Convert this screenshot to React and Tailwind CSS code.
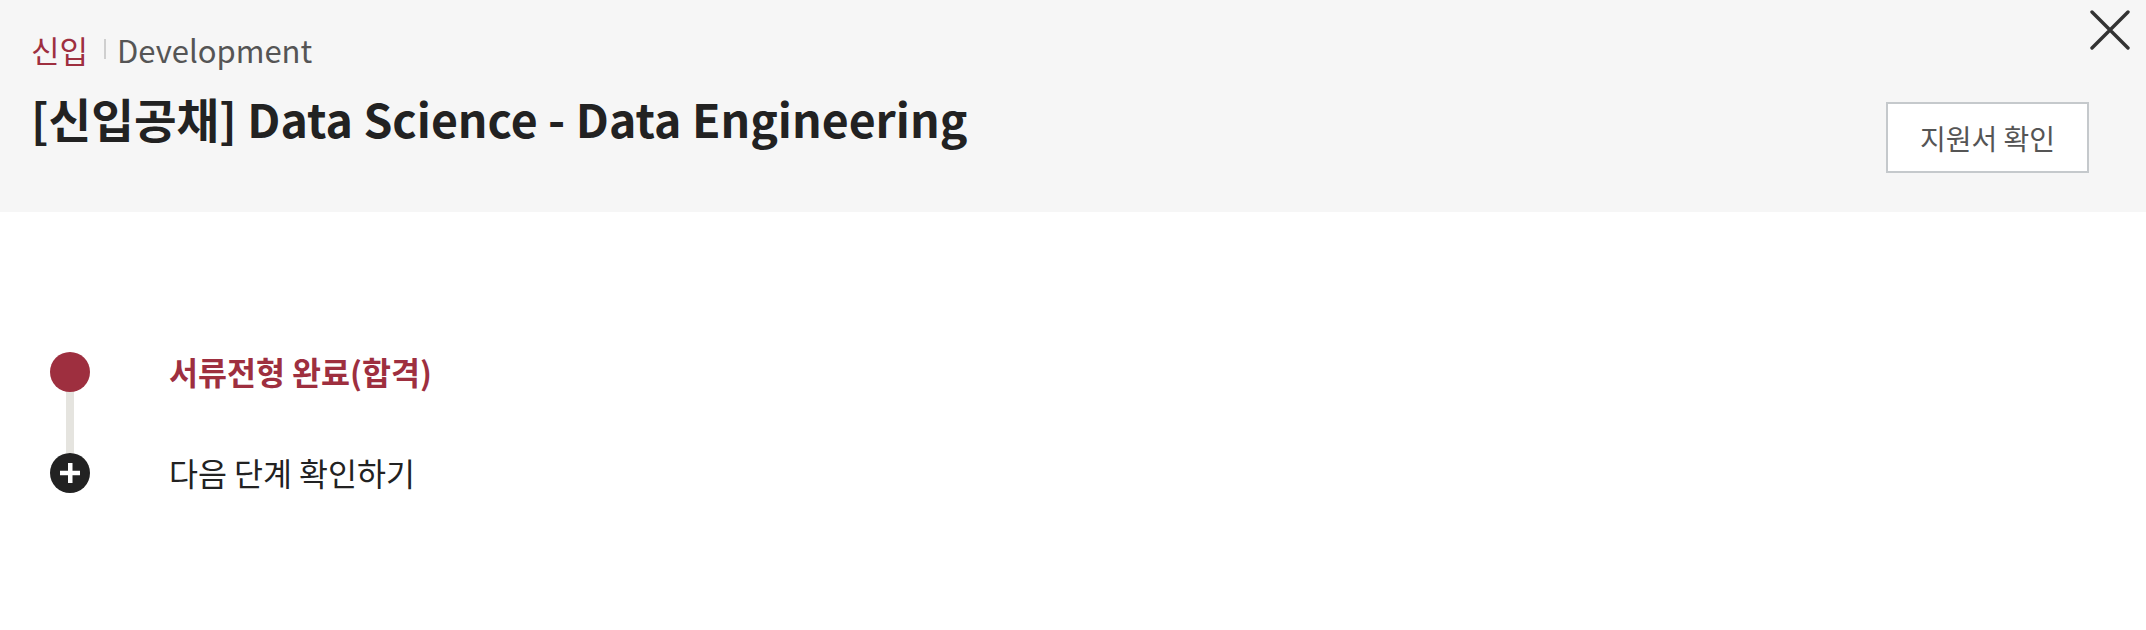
import React from 'react';

const font = { fontFamily: '"Noto Sans CJK KR", "Noto Sans", sans-serif' };

function Step({ done, label }) {
  return (
    <div className="flex items-center gap-[79px] h-[40px]">
      {done ? (
        <span className="w-[40px] h-[40px] rounded-full bg-[#9e2f3f] shrink-0" />
      ) : (
        <span className="w-[40px] h-[40px] rounded-full bg-[#222222] shrink-0 flex items-center justify-center">
          <svg width="20" height="20" viewBox="0 0 20 20" aria-hidden="true">
            <rect x="8" y="0" width="4.5" height="20" fill="#fff" />
            <rect x="0" y="7.75" width="20" height="4.5" fill="#fff" />
          </svg>
        </span>
      )}
      <span
        className={
          done
            ? 'text-[31.5px] font-bold text-[#9e2f3f] leading-none'
            : 'text-[31.5px] text-[#222222] leading-none'
        }
      >
        {label}
      </span>
    </div>
  );
}

export default function App() {
  return (
    <div className="w-full min-h-[630px] bg-white" style={font}>
      <header className="relative h-[212px] bg-[#f6f6f6] flex justify-between pl-[31px] pr-[57px] pt-[27px]">
        <div className="flex flex-col">
          <div className="flex items-center h-[44px] text-[31px] leading-none">
            <span className="text-[#9e2f3f]">신입</span>
            <span className="ml-[16px] mr-[11px] w-[2px] h-[20px] bg-[#cfcfcf]" />
            <span className="text-[#555555]">Development</span>
          </div>
          <h1 className="mt-[17px] text-[46.4px] font-bold leading-[60px] text-[#222222]">
            [신입공채] Data Science - Data Engineering
          </h1>
        </div>

        <button className="mt-[75px] w-[203px] h-[71px] bg-white border-2 border-[#c5c9cc] text-[28px] text-[#555555] flex items-center justify-center">
          지원서 확인
        </button>

        <button className="absolute top-[10px] right-[16px] w-[40px] h-[40px]" aria-label="닫기">
          <svg width="40" height="40" viewBox="0 0 40 40" aria-hidden="true">
            <path d="M2 2 L38 38 M38 2 L2 38" stroke="#333333" strokeWidth="3.4" strokeLinecap="round" />
          </svg>
        </button>
      </header>

      <section className="pl-[50px] pt-[140px]">
        <Step done label="서류전형 완료(합격)" />
        <div className="ml-[16px] w-[8px] h-[61px] bg-[#e5e4df]" />
        <Step label="다음 단계 확인하기" />
      </section>
    </div>
  );
}
